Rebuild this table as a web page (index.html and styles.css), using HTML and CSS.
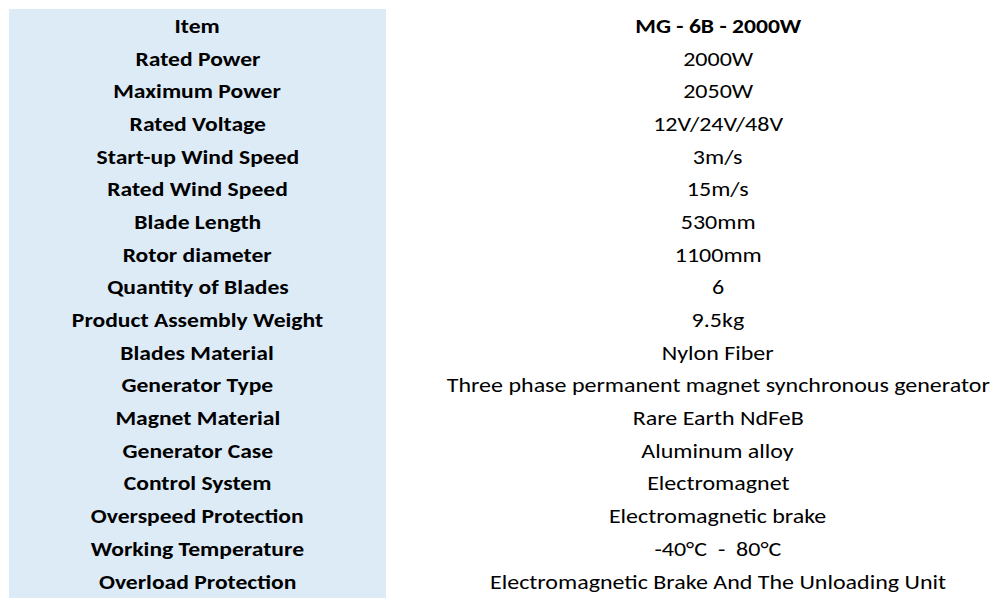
FILE: index.html
```html
<!DOCTYPE html>
<html>
<head>
<meta charset="utf-8">
<link rel="stylesheet" href="styles.css">
</head>
<body>
<div class="spec">
  <div class="col labels">
    <div class="cell"><span class="txt">Item</span></div>
    <div class="cell"><span class="txt">Rated Power</span></div>
    <div class="cell"><span class="txt">Maximum Power</span></div>
    <div class="cell"><span class="txt">Rated Voltage</span></div>
    <div class="cell"><span class="txt">Start-up Wind Speed</span></div>
    <div class="cell"><span class="txt">Rated Wind Speed</span></div>
    <div class="cell"><span class="txt">Blade Length</span></div>
    <div class="cell"><span class="txt">Rotor diameter</span></div>
    <div class="cell"><span class="txt">Quantity of Blades</span></div>
    <div class="cell"><span class="txt">Product Assembly Weight</span></div>
    <div class="cell"><span class="txt">Blades Material</span></div>
    <div class="cell"><span class="txt">Generator Type</span></div>
    <div class="cell"><span class="txt">Magnet Material</span></div>
    <div class="cell"><span class="txt">Generator Case</span></div>
    <div class="cell"><span class="txt">Control System</span></div>
    <div class="cell"><span class="txt">Overspeed Protection</span></div>
    <div class="cell"><span class="txt">Working Temperature</span></div>
    <div class="cell"><span class="txt">Overload Protection</span></div>
  </div>
  <div class="col values">
    <div class="cell head"><span class="txt">MG - 6B - 2000W</span></div>
    <div class="cell"><span class="txt">2000W</span></div>
    <div class="cell"><span class="txt">2050W</span></div>
    <div class="cell"><span class="txt">12V/24V/48V</span></div>
    <div class="cell"><span class="txt">3m/s</span></div>
    <div class="cell"><span class="txt">15m/s</span></div>
    <div class="cell"><span class="txt">530mm</span></div>
    <div class="cell"><span class="txt">1100mm</span></div>
    <div class="cell"><span class="txt">6</span></div>
    <div class="cell"><span class="txt">9.5kg</span></div>
    <div class="cell"><span class="txt">Nylon Fiber</span></div>
    <div class="cell"><span class="txt">Three phase permanent magnet synchronous generator</span></div>
    <div class="cell"><span class="txt">Rare Earth NdFeB</span></div>
    <div class="cell"><span class="txt">Aluminum alloy</span></div>
    <div class="cell"><span class="txt">Electromagnet</span></div>
    <div class="cell"><span class="txt">Electromagnetic brake</span></div>
    <div class="cell"><span class="txt">-40°C&nbsp;&nbsp;-&nbsp;&nbsp;80°C</span></div>
    <div class="cell"><span class="txt">Electromagnetic Brake And The Unloading Unit</span></div>
  </div>
</div>
</body>
</html>
```
FILE: styles.css
```css
html, body {
  margin: 0;
  padding: 0;
  background: #ffffff;
  overflow: hidden;
}
body {
  font-family: Carlito, "Open Sans", "Liberation Sans", sans-serif;
  color: #000000;
}
.spec {
  display: flex;
  padding: 9px 0 0 9px;
}
.col {
  display: flex;
  flex-direction: column;
  padding-top: 0.5px;
  padding-bottom: 0.5px;
}
.labels {
  width: 377px;
  background: #ddebf7;
  font-weight: bold;
}
.values {
  flex: 1;
  padding-left: 50px;
}
.cell {
  height: 32.7px;
  display: flex;
  align-items: center;
  justify-content: center;
  font-size: 20px;
  white-space: nowrap;
}
.txt {
  display: inline-block;
  transform: scaleX(1.2);
}
.labels .txt,
.head .txt {
  transform: scaleX(1.18);
}
.head {
  font-weight: bold;
}
```
